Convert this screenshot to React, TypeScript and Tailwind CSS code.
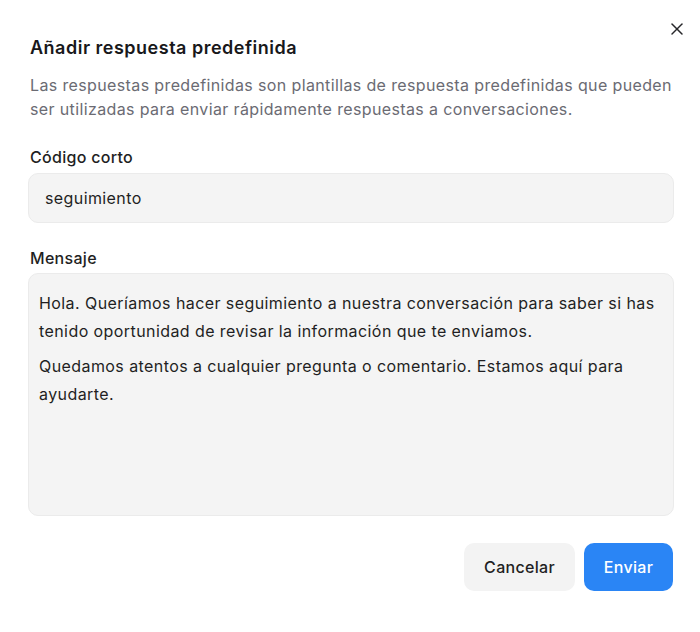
import { X } from 'lucide-react'

export default function App() {
  return (
    <div
      className="relative h-[632px] w-[700px] bg-white pl-7 pr-[26px] pt-[34px] text-[#1f1f23]"
      style={{ fontFamily: 'Inter, "Noto Sans", sans-serif' }}
    >
      <button className="absolute right-[13px] top-[19px] text-[#27272a]" aria-label="Cerrar">
        <X size={20} strokeWidth={1.8} />
      </button>

      <div className="px-[2px]">
        <h2 className="text-[18px] font-semibold leading-7 tracking-[0.5px] text-[#18181b]">
          Añadir respuesta predefinida
        </h2>
        <p className="mt-[11px] text-[16px] leading-6 tracking-[0.37px] text-[#6b6b73]">
          Las respuestas predefinidas son plantillas de respuesta predefinidas que pueden ser utilizadas para enviar
          rápidamente respuestas a conversaciones.
        </p>
      </div>

      <div className="mt-6">
        <label className="block px-[2px] text-[16px] font-medium leading-6 tracking-[0.3px] text-[#1f1f23]">
          Código corto
        </label>
        <div className="mt-1 flex h-[50px] items-center rounded-[10px] border border-[#ebebeb] bg-[#f4f4f4] px-4 text-[16px] tracking-[0.4px]">
          seguimiento
        </div>
      </div>

      <div className="mt-[23px]">
        <label className="block px-[2px] text-[16px] font-medium leading-6 tracking-[0.3px] text-[#1f1f23]">
          Mensaje
        </label>
        <div className="mt-[3px] h-[243px] rounded-[10px] border border-[#ebebeb] bg-[#f4f4f4] px-[10px] pt-4 text-[16px] leading-[27.5px] tracking-[0.42px] text-[#1f1f23]">
          <p>
            Hola. Queríamos hacer seguimiento a nuestra conversación para saber si has tenido oportunidad de revisar la
            información que te enviamos.
          </p>
          <p className="mt-2">Quedamos atentos a cualquier pregunta o comentario. Estamos aquí para ayudarte.</p>
        </div>
      </div>

      <div className="mr-[1px] mt-[27px] flex justify-end gap-[9px]">
        <button className="h-12 w-[111px] rounded-[10px] bg-[#f3f3f3] text-[16px] font-medium tracking-[0.3px] text-[#1f1f23]">
          Cancelar
        </button>
        <button className="h-12 w-[89px] rounded-[10px] bg-[#2a85f5] text-[16px] font-medium tracking-[0.3px] text-white">
          Enviar
        </button>
      </div>
    </div>
  )
}
